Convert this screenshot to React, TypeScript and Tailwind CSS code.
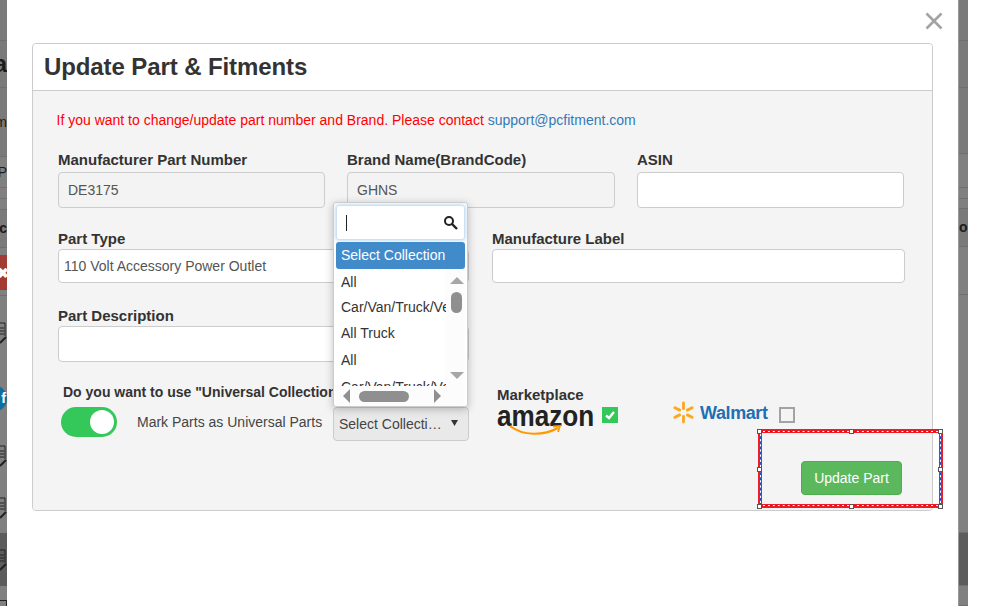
import React from "react";

const font = { fontFamily: '"Liberation Sans", Arial, sans-serif' };

function Field({ label, value, className, disabled, h = "h-[36px]", gap = "mt-[4px]" }: { label: string; value?: string; className: string; disabled?: boolean; h?: string; gap?: string }) {
  return (
    <div className={className}>
      <div className="text-[15px] leading-[16px] font-bold text-[#333] whitespace-nowrap">{label}</div>
      <div className={`${h} ${gap} rounded-[4px] border border-[#ccc] flex items-center text-[14px] text-[#555] ${disabled ? "bg-[#f3f3f3] pl-[9px]" : "bg-white pl-[5px]"}`}>{value}</div>
    </div>
  );
}

function Handle({ className }: { className: string }) {
  return <span className={`absolute w-[5px] h-[5px] bg-white border border-[#555] ${className}`} />;
}

function DocIcon() {
  return (
    <svg className="shrink-0" width="22" height="22" viewBox="0 0 22 22">
      <path d="M1 1 H20 V14" stroke="#222" strokeWidth="1" fill="none" />
      <path d="M15 6 H19 M15 9 H19 M15 12 H19" stroke="#222" strokeWidth="1.2" />
      <path d="M15 21 L21 15" stroke="#222" strokeWidth="2" />
    </svg>
  );
}

type Row = { h: number; dark?: boolean; band?: boolean; content?: React.ReactNode; line?: boolean };

function Strip({ rows, className, end }: { rows: Row[]; className: string; end?: boolean }) {
  return (
    <div className={`${className} shrink-0 h-full overflow-hidden bg-[#808080] flex flex-col`}>
      {rows.map((r, i) => (
        <div
          key={i}
          style={{ height: r.h }}
          className={`shrink-0 flex items-center whitespace-nowrap text-[#1c1c1c] font-bold ${end ? "justify-end" : "justify-start"} ${r.line === false ? "" : "border-b border-[#6f6f6f]"} ${r.dark ? "bg-[#5c5c5c]" : r.band ? "bg-[#7a7a7a]" : ""}`}
        >
          {r.content}
        </div>
      ))}
    </div>
  );
}

export default function App() {
  return (
    <div style={font} className="w-[996px] h-[606px] overflow-hidden bg-white flex">
      <Strip
        end
        className="w-[7px]"
        rows={[
          { h: 41, band: true },
          { h: 47, band: true, content: <span className="text-[24px]">a</span> },
          { h: 69, band: true, content: <span className="text-[14px] font-normal">m</span> },
          { h: 31, content: <span className="text-[14px] font-normal">P</span> },
          { h: 11 },
          { h: 11 },
          { h: 38, band: true, content: <span className="text-[14px]">c</span> },
          { h: 7, line: false },
          {
            h: 35,
            line: false,
            content: (
              <div className="w-full h-full bg-[#a33a34] flex items-center justify-start text-white text-[14px] leading-none overflow-hidden">
                <span className="ml-[-3px]">✖</span>
              </div>
            ),
          },
          { h: 6 },
          { h: 26, line: false },
          { h: 22, line: false, content: <DocIcon /> },
          { h: 41, line: false },
          {
            h: 27,
            line: false,
            content: (
              <div className="shrink-0 w-[27px] h-[27px] rounded-full bg-[#0f6f9f] flex items-center justify-end pr-[1px] text-white text-[14px]">
                f
              </div>
            ),
          },
          { h: 33, line: false },
          { h: 22, line: false, content: <DocIcon /> },
          { h: 30, line: false },
          { h: 22, line: false, content: <DocIcon /> },
          { h: 14, line: false },
          { h: 53, dark: true, line: false, content: <DocIcon /> },
          { h: 14, line: false },
          { h: 6, line: false, content: <div className="h-[6px] w-[7px] border-t border-r border-[#222]" /> },
        ]}
      />
      <div className="relative w-[951px] h-full shrink-0 bg-white">
        <svg className="absolute left-[918px] top-[12px]" width="18" height="18" viewBox="0 0 18 18">
          <path d="M1.5 1.5 L16.5 16.5 M16.5 1.5 L1.5 16.5" stroke="#a3a3a3" strokeWidth="2.6" />
        </svg>

        <div className="ml-[25px] mt-[43px] w-[901px] h-[468px] rounded-[4px] border border-[#ccc] flex flex-col">
          <div className="h-[47px] shrink-0 border-b border-[#ccc] pl-[11px] flex items-center text-[24px] tracking-[-0.1px] font-bold text-[#333] bg-white rounded-t-[4px]">
            Update Part &amp; Fitments
          </div>
          <div className="flex-1 bg-[#f4f4f4] rounded-b-[4px] pl-[25px] pt-[21px] relative">
            <div className="text-[14px] leading-[16px] text-[#f00] ml-[-1.5px]">
              If you want to change/update part number and Brand. Please contact <span className="text-[#337ab7]">support@pcfitment.com</span>
            </div>
            <div className="flex mt-[24px]">
              <Field className="w-[267px]" label="Manufacturer Part Number" value="DE3175" disabled />
              <Field className="w-[268px] ml-[22px]" label="Brand Name(BrandCode)" value="GHNS" disabled />
              <Field className="w-[267px] ml-[22px]" label="ASIN" />
            </div>
            <div className="flex mt-[23px]">
              <Field className="w-[411px]" label="Part Type" value="110 Volt Accessory Power Outlet" h="h-[34px]" gap="mt-[2px]" />
              <Field className="w-[413px] ml-[23px]" label="Manufacture Label" h="h-[34px]" gap="mt-[2px]" />
            </div>
            <Field className="w-[411px] mt-[25px]" label="Part Description" gap="mt-[2px]" />

            <div className="flex mt-[22px] pl-[3px]">
              <div className="w-[272px] shrink-0">
                <div className="text-[14px] leading-[16px] font-bold text-[#333] pl-[2px] whitespace-nowrap">Do you want to use "Universal Collection</div>
                <div className="flex items-center mt-[7px]">
                  <div className="w-[56px] h-[30px] rounded-full bg-[#34c759] flex items-center justify-end pr-[3px]">
                    <div className="w-[24px] h-[24px] rounded-full bg-white" />
                  </div>
                  <div className="ml-[20px] text-[14px] text-[#444] whitespace-nowrap">Mark Parts as Universal Parts</div>
                </div>
              </div>
              <div className="w-[136px] h-[34px] mt-[23px] shrink-0 rounded-[4px] border border-[#ccc] bg-[#e9e9e9] flex items-center pl-[5px] text-[14px] text-[#444] justify-between pr-[10px]">
                <span className="whitespace-nowrap">Select Collecti…</span>
                <svg className="mt-[-2px]" width="7" height="6" viewBox="0 0 7 6"><path d="M0 0 H7 L3.5 6 Z" fill="#333" /></svg>
              </div>
              <div className="ml-[28px] mt-[3px] shrink-0">
                <div className="text-[15px] leading-[16px] font-bold text-[#333]">Marketplace</div>
                <div className="relative flex items-start mt-[-1px]">
                  <div className="relative w-[97px] h-[28px]">
                    <div className="text-[30px] leading-[28px] font-bold text-[#222] origin-left scale-x-[0.87] whitespace-nowrap">amazon</div>
                    <svg className="absolute left-[12px] top-[23px]" width="54" height="12" viewBox="0 0 54 12">
                      <path d="M1 1 C14 11 34 11 49 3" stroke="#f90" strokeWidth="2.2" fill="none" />
                      <path d="M44 1.5 L51 1 L49 7" stroke="#f90" strokeWidth="1.8" fill="none" />
                    </svg>
                  </div>
                  <div className="ml-[8px] mt-[5px] w-[16px] h-[16px] bg-[#34c759] flex items-center justify-center">
                    <svg width="12" height="12" viewBox="0 0 12 12">
                      <path d="M2 6.5 L5 9 L10 3" stroke="#fff" strokeWidth="2.4" fill="none" />
                    </svg>
                  </div>
                </div>
              </div>
              <div className="ml-[54px] mt-[19px] shrink-0 flex items-center h-[24px]">
                <svg className="mt-[-6px]" width="23" height="23" viewBox="0 0 24 24">
                  <g stroke="#f9a825" strokeWidth="3" strokeLinecap="round">
                    <path d="M12 2 V8" />
                    <path d="M12 16 V22" />
                    <path d="M3 7 L8 9.5" />
                    <path d="M21 7 L16 9.5" />
                    <path d="M3 17 L8 14.5" />
                    <path d="M21 17 L16 14.5" />
                  </g>
                </svg>
                <span className="ml-[5px] mt-[-3px] text-[18px] font-bold text-[#1f6fb5] tracking-[-0.4px]">Walmart</span>
                <div className="ml-[11px] w-[16px] h-[16px] border-2 border-[#a3a3a3] bg-transparent" />
              </div>
            </div>

            <button className="absolute left-[768px] top-[370px] w-[101px] h-[34px] rounded-[4px] bg-[#5cb85c] border border-[#4cae4c] text-white text-[14px]">
              Update Part
            </button>
          </div>
        </div>

        {/* open dropdown */}
        <div className="absolute left-[326px] top-[202px] w-[135px] h-[205px] bg-white border border-[#ccc] rounded-[3px] shadow-[0_2px_8px_rgba(0,0,0,0.25)] overflow-hidden flex flex-col px-[2px] pt-[2px]">
          <div className="h-[35px] shrink-0 bg-white rounded-[3px] border border-[#cfe0f0] shadow-[0_0_4px_rgba(102,175,233,0.6)] flex items-center justify-between pl-[9px] pr-[6px]">
            <div className="w-[1px] h-[16px] bg-[#222]" />
            <svg width="15" height="15" viewBox="0 0 15 15">
              <circle cx="6" cy="6" r="4" stroke="#222" strokeWidth="2" fill="none" />
              <path d="M9 9 L14 14" stroke="#222" strokeWidth="2.4" />
            </svg>
          </div>
          <div className="h-[27px] mt-[2px] shrink-0 rounded-[3px] bg-[#428bca] text-white text-[14px] flex items-center pl-[5px]">Select Collection</div>
          <div className="relative flex-1 overflow-hidden">
            <div className="pl-[5px] text-[14px] text-[#333] overflow-hidden whitespace-nowrap">
              <div className="h-[26px] flex items-center">All</div>
              <div className="h-[24px] flex items-center">Car/Van/Truck/Vehicle</div>
              <div className="h-[28px] flex items-center">All Truck</div>
              <div className="h-[27px] flex items-center">All</div>
              <div className="h-[26px] flex items-center">Car/Van/Truck/Vehicle</div>
            </div>
            <div className="absolute left-0 right-0 bottom-0 h-[20px] bg-[#fcfcfc]" />
            <div className="absolute right-0 top-0 bottom-0 w-[19px] bg-[#fcfcfc]" />
            <svg className="absolute left-[113px] top-[8px]" width="16" height="8" viewBox="0 0 16 8"><path d="M8 0 L15 7 H1 Z" fill="#a6a6a6" /></svg>
            <div className="absolute left-[115px] top-[23px] w-[11px] h-[21px] rounded-full bg-[#8f8f8f]" />
            <svg className="absolute left-[113px] top-[102px]" width="16" height="8" viewBox="0 0 16 8"><path d="M8 8 L15 1 H1 Z" fill="#a6a6a6" /></svg>
            <svg className="absolute left-[7px] top-[120px]" width="8" height="14" viewBox="0 0 8 14"><path d="M0 7 L7 0 V14 Z" fill="#8f8f8f" /></svg>
            <div className="absolute left-[23px] top-[122px] w-[50px] h-[11px] rounded-full bg-[#8f8f8f]" />
            <svg className="absolute left-[97px] top-[120px]" width="8" height="14" viewBox="0 0 8 14"><path d="M8 7 L1 0 V14 Z" fill="#8f8f8f" /></svg>
          </div>
        </div>

        {/* selection rectangle */}
        <div className="absolute left-[751px] top-[429px] w-[185px] h-[79px] border-[4px] border-[#ee1c25]">
          <div className="absolute inset-[-2px] border border-white" />
          <div className="absolute inset-[-2px] border border-dashed border-[#1d4fc4]" />
          <Handle className="left-[-5px] top-[-4px]" />
          <Handle className="left-[87px] top-[-4px]" />
          <Handle className="right-[-4px] top-[-4px]" />
          <Handle className="left-[-5px] top-[34px]" />
          <Handle className="right-[-4px] top-[34px]" />
          <Handle className="left-[-5px] bottom-[-5px]" />
          <Handle className="left-[87px] bottom-[-5px]" />
          <Handle className="right-[-4px] bottom-[-5px]" />
        </div>
      </div>
      <Strip
        className="w-[10px] border-l border-[#999]"
        rows={[
          { h: 41, band: true },
          { h: 47, band: true },
          { h: 66, band: true },
          { h: 34 },
          { h: 11 },
          { h: 10 },
          { h: 38, band: true, content: <span className="text-[14px]">o</span> },
          { h: 48 },
          { h: 238 },
          { h: 53, dark: true },
          { h: 20 },
        ]}
      />
      <div className="flex-1 bg-white" />
    </div>
  );
}
